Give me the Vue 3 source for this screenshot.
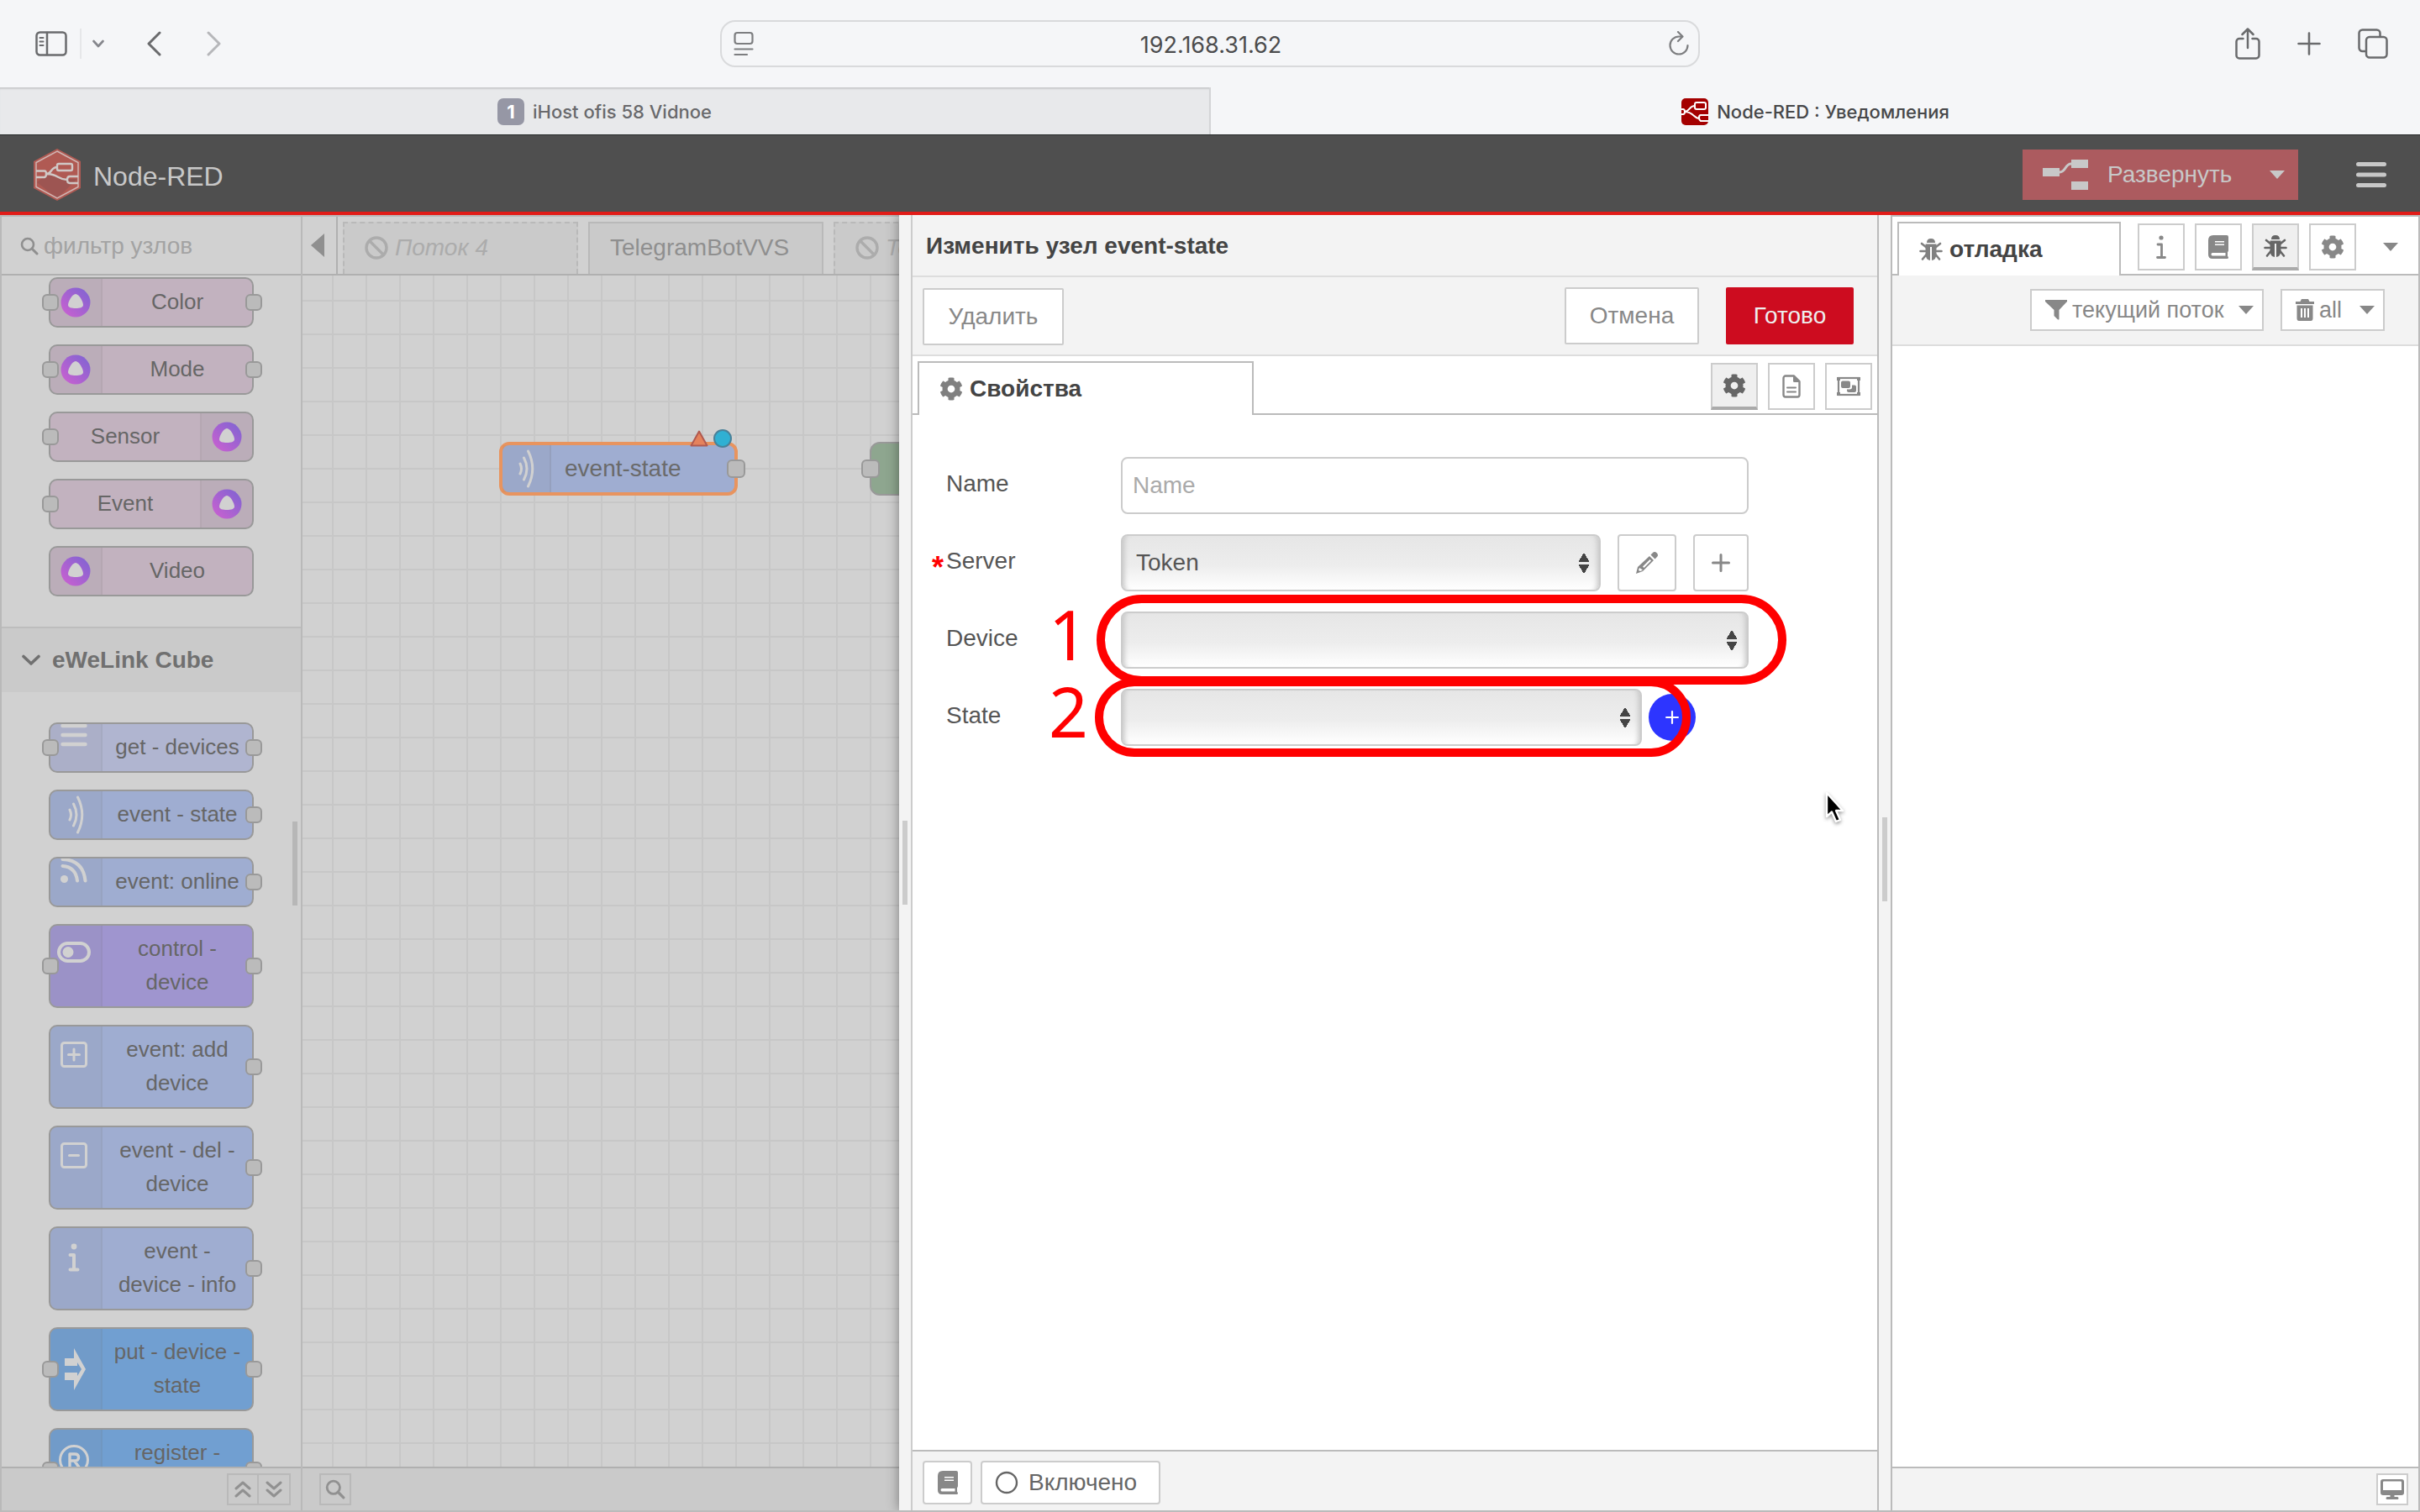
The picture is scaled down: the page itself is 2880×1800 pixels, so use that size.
<script setup>
import { h, ref } from 'vue'

const line = (d, w = 2, extra = '') =>
  `<path d="${d}" fill="none" stroke="currentColor" stroke-width="${w}" stroke-linecap="round" stroke-linejoin="round" ${extra}/>`
const fill = (d) => `<path d="${d}" fill="currentColor" fill-rule="evenodd"/>`

const shapes = {
  sidebar: [38, 30, `<rect x="1.500" y="1.500" width="35" height="27" rx="4" fill="none" stroke="currentColor" stroke-width="2.500"/>` + line('M14 2V28', 2.5) + line('M5.500 8H9.500M5.500 12.500H9.500M5.500 17H9.500', 2)],
  chevDown: [14, 10, line('M1.500 2L7 8L12.500 2', 2.6)],
  back: [18, 30, line('M16 2L3 15L16 28', 3)],
  forward: [18, 30, line('M2 2L15 15L2 28', 3)],
  reader: [24, 30, `<rect x="1.500" y="2" width="21" height="13" rx="3" fill="none" stroke="currentColor" stroke-width="2.200"/>` + line('M1.500 21.500H22.500M1.500 28H16', 2.2)],
  reload: [26, 30, line('M23.500 17A10.500 10.500 0 1 1 13 6.500H17M12 1L17.500 6.500L12 12', 2.2)],
  share: [30, 38, line('M9.500 13H5A3.500 3.500 0 0 0 1.500 16.500V33A3.500 3.500 0 0 0 5 36.500H25A3.500 3.500 0 0 0 28.500 33V16.500A3.500 3.500 0 0 0 25 13H20.500M15 24V2M8.500 8L15 1.500L21.500 8', 2.5)],
  add: [28, 28, line('M14 1.500V26.500M1.500 14H26.500', 2.6)],
  tabs: [36, 36, `<rect x="10" y="10" width="24.500" height="24.500" rx="4" fill="none" stroke="currentColor" stroke-width="2.500"/>` + line('M9.500 27H5.500A4 4 0 0 1 1.500 23V5.500A4 4 0 0 1 5.500 1.500H22.500A4 4 0 0 1 26.500 5.500V9.500', 2.5)],
  favicon: [32, 32, `<rect width="32" height="32" rx="5" fill="#a40000"/><g fill="none" stroke="#fff" stroke-width="2"><rect x="16" y="5" width="13" height="8" rx="2"/><path d="M0 13H2Q4 13 4 16T2 19H0M4 16C10 16 9 9 16 9M4 16C14 16 15 24 21 24M32 20H23Q21 20 21 23T23 27H32"/></g>`],
  logo: [56, 62, `<path d="M28 0L56 15V47L28 62L0 47V15Z" fill="#b05a53"/><path d="M52 36L28 59L4 40L18 29L36 36Z" fill="#9d5552"/><path d="M28 3L53 16.500V45.500L28 59L3 45.500V16.500Z" fill="none" stroke="#d0b5b3" stroke-width="1.500"/><g fill="none" stroke="#d0c8c6" stroke-width="2.400"><rect x="28" y="18" width="18" height="8" rx="2"/><path d="M3 26.500H13Q15 26.500 15 30T13 34H3M15 30C22 30 20 22 28 22M16 30C29 30 29 37 40 37M53 33H43Q40 33 40 37T43 41H53"/></g>`],
  deploy: [54, 36, fill('M0 10H20V20H0ZM34 0H54V10H34ZM34 26H54V36H34Z') + line('M20 15C28 15 26 5 34 5', 3)],
  burger: [36, 30, line('M2.500 2.500H33.500M2.500 15H33.500M2.500 27.500H33.500', 5)],
  caret: [18, 10, fill('M0 0H18L9 10Z')],
  search: [22, 22, `<circle cx="9" cy="9" r="7" fill="none" stroke="currentColor" stroke-width="2.600"/>` + line('M14 14L20 20', 3)],
  left: [16, 28, fill('M16 0V28L0 14Z')],
  ban: [28, 28, `<circle cx="14" cy="14" r="12" fill="none" stroke="currentColor" stroke-width="3.400"/>` + line('M6 6L22 22', 3.4)],
  up2: [20, 22, line('M2 10L10 3L18 10M2 19L10 12L18 19', 3)],
  down2: [20, 22, line('M2 3L10 10L18 3M2 12L10 19L18 12', 3)],
  chevron: [22, 14, line('M2 2.500L11 11L20 2.500', 3.6)],
  cog: [512, 512, fill('M487.4 315.7l-42.6-24.6c4.3-23.2 4.3-47 0-70.2l42.6-24.6c4.9-2.8 7.1-8.6 5.5-14-11.1-35.6-30-67.8-54.7-94.6-3.8-4.1-10-5.1-14.8-2.3L380.8 110c-17.9-15.4-38.5-27.3-60.8-35.1V25.8c0-5.6-3.9-10.5-9.4-11.7-36.7-8.2-74.3-7.8-109.2 0-5.5 1.200-9.400 6.100-9.400 11.700V75c-22.200 7.900-42.800 19.800-60.800 35.100L88.700 85.500c-4.900-2.800-11-1.900-14.800 2.300-24.700 26.700-43.600 58.900-54.700 94.600-1.700 5.400.6 11.200 5.500 14L67.300 221c-4.300 23.200-4.300 47 0 70.200l-42.600 24.600c-4.900 2.800-7.100 8.600-5.500 14 11.100 35.600 30 67.800 54.700 94.600 3.800 4.100 10 5.100 14.800 2.300l42.600-24.600c17.900 15.400 38.500 27.300 60.800 35.100v49.200c0 5.600 3.900 10.500 9.400 11.700 36.700 8.200 74.300 7.800 109.200 0 5.500-1.200 9.400-6.100 9.400-11.700v-49.200c22.200-7.900 42.800-19.800 60.800-35.100l42.600 24.600c4.900 2.800 11 1.900 14.800-2.300 24.700-26.700 43.600-58.900 54.700-94.600 1.500-5.500-.7-11.300-5.600-14.100zM256 336c-44.100 0-80-35.900-80-80s35.900-80 80-80 80 35.900 80 80-35.900 80-80 80z')],
  doc: [22, 28, line('M1.500 4A2.500 2.500 0 0 1 4 1.500H14L20.500 8V24A2.500 2.500 0 0 1 18 26.500H4A2.500 2.500 0 0 1 1.500 24Z', 2.4) + fill('M13 1L21 9H14.500Q13 9 13 7.500Z') + line('M6 15.500H16M6 20.500H16', 2)],
  group: [28, 24, `<rect x="2" y="2" width="24" height="20" fill="none" stroke="currentColor" stroke-width="2.200"/>` + fill('M0 1H4V5H0ZM24 1H28V5H24ZM0 19H4V23H0ZM24 19H28V23H24ZM7 5.500H14Q16 5.500 16 7.500V12Q16 14 14 14H7Q5 14 5 12V7.500Q5 5.500 7 5.500ZM18 10.500H21Q23 10.500 23 12.500V17Q23 19 21 19H14Q12 19 12 17V15.500H15Q18 15.500 18 13Z')],
  pencil: [28, 28, fill('M1 27L3 19L17 6L22 11L9 24ZM5 20L4 23L6 24L9 22.500ZM9 18.500L10.500 20L19 11.500L17.500 10ZM18.500 4.500L21 2Q23 0 26 2.500Q28 5 26 7L23.500 9.500Z')],
  plus: [22, 22, line('M11 1.500V20.500M1.500 11H20.500', 3)],
  info: [12, 30, `<circle cx="6" cy="4" r="2.600" fill="currentColor"/>` + line('M2 12H6.500V27M1.500 27.500H10.500', 2.8)],
  book: [24, 28, fill('M6 0H22Q24 0 24 2V18Q24 19.500 23 20V25Q24 25.500 24 26.500Q24 28 22.500 28H5Q0 28 0 23V6Q0 0 6 0ZM8 7V8.500H19V7ZM8 10.500V12H19V10.500ZM5 21Q3.500 21 3.500 22.700T5 24.500H20.500V21Z')],
  bug: [28, 28, fill('M9 6Q9 1 14 1T19 6ZM7.500 7.500H20.500V19Q20.500 26 15 27V11H13V27Q7.500 26 7.500 19Z') + line('M8 11L3 7M20 11L25 7M7 16H1.500M21 16H26.500M8.500 20L4 25.500M19.500 20L24 25.500', 2.6)],
  funnel: [26, 24, fill('M0 0H26Q27 1.500 25 3L16.500 12V23Q16 24 14.500 23L10.500 19V12L1 3Q-1 1.500 0 0Z')],
  trash: [22, 26, fill('M7 0H15L16.500 3H22V6H0V3H5.500ZM1.500 7.500H20.500V23Q20.500 26 18 26H4Q1.500 26 1.500 23ZM6 11V22H8V11ZM10 11V22H12V11ZM14 11V22H16V11Z')],
  monitor: [28, 24, fill('M3 0H25Q28 0 28 3V16Q28 19 25 19H16.500V21H20Q21.500 21 21.500 22.500T20 24H8Q6.500 24 6.500 22.500T8 21H11.500V19H3Q0 19 0 16V3Q0 0 3 0ZM4 2.500Q3 2.500 3 3.500V13H25V3.500Q25 2.500 24 2.500Z')],
  circle: [28, 28, `<circle cx="14" cy="14" r="12" fill="none" stroke="currentColor" stroke-width="2.400"/>`],
  alice: [36, 36, `<defs><linearGradient id="alice" x1="0" y1="1" x2="1" y2="0"><stop offset="0" stop-color="#cf60d0"/><stop offset="1" stop-color="#7b64d2"/></linearGradient></defs><circle cx="18" cy="18" r="17.500" fill="url(#alice)"/><path d="M18 8C22 8 27 17 27 21C27 24 23 25 18 25S9 24 9 21C9 17 14 8 18 8Z" fill="#d1d1d1"/>`],
  list: [32, 28, line('M2.500 2H29.500M2.500 13H29.500M2.500 24H29.500', 4.4)],
  waves: [20, 48, line('M3 18Q6 24 3 30M7.500 11Q14.500 24 7.500 37M12.500 3Q23 24 12.500 45', 3)],
  rss: [32, 30, `<circle cx="4.500" cy="24.500" r="4.500" fill="currentColor"/>` + line('M2.500 9Q18 10 20 26.500M2.500 1Q27 2 29.500 26.500', 4)],
  toggle: [42, 28, `<rect x="3" y="3" width="36" height="21" rx="10.500" fill="none" stroke="currentColor" stroke-width="4"/><circle cx="14" cy="13.500" r="6.500" fill="currentColor"/>`],
  boxAdd: [32, 32, `<rect x="1.500" y="1.500" width="29" height="28" rx="3" fill="none" stroke="currentColor" stroke-width="3"/>` + line('M9.500 15.500H22.500M16 9V22', 3)],
  boxDel: [32, 32, `<rect x="1.500" y="1.500" width="29" height="28" rx="3" fill="none" stroke="currentColor" stroke-width="3"/>` + line('M10.500 15.500H21.500', 3)],
  infoBold: [14, 34, `<circle cx="7" cy="4" r="3.400" fill="currentColor"/>` + line('M2.500 14H7V31M2.500 31.500H11.500', 4)],
  put: [26, 50, fill('M0 12H11V0L25 25L11 50V38H0V29H15V33L20 25L15 17V21H0Z')],
  registered: [36, 36, `<circle cx="18" cy="18" r="16.500" fill="none" stroke="currentColor" stroke-width="3"/>` + line('M13 26V11H19Q23.500 11 23.500 15T19 19H13M18.500 19L23.500 26', 3.4)],
  warn: [22, 20, `<path d="M11 1.500L20.500 18.500H1.500Z" fill="#e5825c" stroke="#b05a50" stroke-width="2" stroke-linejoin="round"/>`],
  changed: [22, 22, `<circle cx="11" cy="11" r="10" fill="#30b0d3" stroke="#4a8199" stroke-width="2"/>`],
  cursor: [26, 40, `<path d="M2 2V30L8 24.500L13 36L18 34L13 23H21Z" fill="#000" stroke="#fff" stroke-width="2.400" stroke-linejoin="round"/>`]
}

const Icon = ({ name, size }) => {
  const [w, ht, body] = shapes[name]
  const k = size ? size / w : 1
  return h('svg', { width: w * k, height: ht * k, viewBox: `0 0 ${w} ${ht}`, innerHTML: body, 'aria-hidden': 'true' })
}
Icon.props = ['name', 'size']

const aliceNodes = [
  { lines: ['Color'], input: true, output: true },
  { lines: ['Mode'], input: true, output: true },
  { lines: ['Sensor'], input: true, right: true },
  { lines: ['Event'], input: true, right: true },
  { lines: ['Video'] }
]
const cubeNodes = [
  { lines: ['get - devices'], tone: 'pale', icon: 'list', input: true, output: true, at: 'top' },
  { lines: ['event - state'], tone: 'blue', icon: 'waves', output: true, at: 'mid' },
  { lines: ['event: online'], tone: 'blue', icon: 'rss', output: true, at: 'top' },
  { lines: ['control -', 'device'], tone: 'violet', icon: 'toggle', input: true, output: true },
  { lines: ['event: add', 'device'], tone: 'blue', icon: 'boxAdd', output: true },
  { lines: ['event - del -', 'device'], tone: 'blue', icon: 'boxDel', output: true },
  { lines: ['event -', 'device - info'], tone: 'blue', icon: 'infoBold', output: true },
  { lines: ['put - device -', 'state'], tone: 'azure', icon: 'put', input: true, output: true, at: 'mid' },
  { lines: ['register -', 'device'], tone: 'azure', icon: 'registered', input: true, output: true }
]
const categoryNodes = [aliceNodes.map((n) => ({ ...n, tone: 'pink', icon: 'alice', at: 'mid' })), cubeNodes]

const address = ref('192.168.31.62')
const nodeName = ref('')
const server = ref('Token')
</script>

<template>
  <div class="window">
    <nav class="toolbar">
      <div class="nav-group">
        <button class="plain" aria-label="Sidebar"><Icon name="sidebar" /></button>
        <span class="nav-rule"></span>
        <button class="plain menu" aria-label="Sidebar menu"><Icon name="chevDown" /></button>
        <button class="plain prev" aria-label="Back"><Icon name="back" /></button>
        <button class="plain next" aria-label="Forward"><Icon name="forward" /></button>
      </div>
      <div class="address">
        <Icon name="reader" />
        <input v-model="address" aria-label="Address" />
        <button class="plain" aria-label="Reload"><Icon name="reload" /></button>
      </div>
      <div class="nav-group end">
        <button class="plain" aria-label="Share"><Icon name="share" /></button>
        <button class="plain" aria-label="New tab"><Icon name="add" /></button>
        <button class="plain" aria-label="Tabs"><Icon name="tabs" /></button>
      </div>
    </nav>

    <div class="browser-tabs">
      <a href="#" class="btab idle"><span class="count">1</span>iHost ofis 58 Vidnoe</a>
      <a href="#" class="btab"><Icon name="favicon" />Node-RED : Уведомления</a>
    </div>

    <header class="header">
      <Icon name="logo" />
      <span class="brand">Node-RED</span>
      <button class="deploy"><Icon name="deploy" /><span>Развернуть</span><Icon name="caret" /></button>
      <button class="plain burger" aria-label="Menu"><Icon name="burger" /></button>
    </header>

    <main class="main">
      <aside class="palette">
        <label class="filter"><Icon name="search" /><input placeholder="фильтр узлов" aria-label="фильтр узлов" /></label>
        <div class="palette-list">
          <template v-for="(nodes, c) in categoryNodes" :key="c">
            <h2 v-if="c" class="category"><Icon name="chevron" />eWeLink Cube</h2>
            <div class="nodes" :class="{ first: !c }">
              <div v-for="n in nodes" :key="n.lines[0]" class="node" :class="[n.tone, { flip: n.right }]">
                <span class="node-icon" :class="n.at"><Icon :name="n.icon" /></span>
                <span class="node-label"><span v-for="l in n.lines" :key="l">{{ l }}</span></span>
                <i v-if="n.input" class="port in"></i>
                <i v-if="n.output" class="port out"></i>
              </div>
            </div>
          </template>
          <i class="handle"></i>
        </div>
        <footer class="foot">
          <button class="tool" aria-label="Collapse all"><Icon name="up2" /></button>
          <button class="tool joined" aria-label="Expand all"><Icon name="down2" /></button>
        </footer>
      </aside>

      <section class="workspace">
        <div class="flow-tabs">
          <button class="plain collapse" aria-label="Scroll tabs"><Icon name="left" /></button>
          <button class="flow off"><Icon name="ban" />Поток 4</button>
          <button class="flow">TelegramBotVVS</button>
          <button class="flow off"><Icon name="ban" />Te</button>
        </div>
        <div class="canvas">
          <div class="flow-node selected">
            <span class="flow-icon"><Icon name="waves" /></span>
            <span class="flow-label">event-state</span>
            <i class="port out"></i>
            <Icon name="warn" class="badge-warn" />
            <Icon name="changed" class="badge-changed" />
          </div>
          <div class="flow-node green"><i class="port in"></i></div>
        </div>
        <footer class="foot start">
          <button class="tool" aria-label="Search flows"><Icon name="search" size="24" /></button>
        </footer>
      </section>

      <section class="tray">
        <div class="tray-edge"><i class="grip"></i></div>
        <div class="tray-body">
          <h1 class="tray-title">Изменить узел event-state</h1>
          <div class="tray-actions">
            <button class="btn">Удалить</button>
            <button class="btn cancel">Отмена</button>
            <button class="btn done">Готово</button>
          </div>
          <div class="tabbar tray-tabs">
            <a href="#" class="tab"><Icon name="cog" size="28" />Свойства</a>
            <div class="tab-buttons">
              <button class="sq active" aria-label="Свойства"><Icon name="cog" size="28" /></button>
              <button class="sq" aria-label="Описание"><Icon name="doc" /></button>
              <button class="sq" aria-label="Внешний вид"><Icon name="group" /></button>
            </div>
          </div>
          <form class="form" @submit.prevent>
            <div class="row">
              <label for="f-name">Name</label>
              <input id="f-name" v-model="nodeName" placeholder="Name" />
            </div>
            <div class="row">
              <label for="f-server"><b>*</b>Server</label>
              <select id="f-server" v-model="server"><option>Token</option></select>
              <button class="side edit" aria-label="Edit server"><Icon name="pencil" /></button>
              <button class="side" aria-label="Add server"><Icon name="plus" /></button>
            </div>
            <div class="row">
              <label for="f-device">Device</label>
              <select id="f-device"><option></option></select>
              <span class="step">1</span>
              <span class="ring device"></span>
            </div>
            <div class="row">
              <label for="f-state">State</label>
              <select id="f-state"><option></option></select>
              <button class="round" aria-label="Add state"><Icon name="plus" size="16" /></button>
              <span class="step">2</span>
              <span class="ring"></span>
            </div>
            <Icon name="cursor" class="cursor" />
          </form>
          <footer class="tray-foot">
            <button class="fbtn" aria-label="Help"><Icon name="book" /></button>
            <button class="fbtn wide"><Icon name="circle" />Включено</button>
          </footer>
        </div>
      </section>

      <div class="separator"><i class="grip"></i></div>

      <aside class="sidebar">
        <div class="tabbar">
          <a href="#" class="tab"><Icon name="bug" />отладка</a>
          <div class="tab-buttons">
            <button class="sq" aria-label="Info"><Icon name="info" /></button>
            <button class="sq" aria-label="Help"><Icon name="book" /></button>
            <button class="sq active" aria-label="Debug"><Icon name="bug" /></button>
            <button class="sq" aria-label="Config"><Icon name="cog" size="28" /></button>
          </div>
          <button class="plain more" aria-label="More"><Icon name="caret" /></button>
        </div>
        <div class="debug-bar">
          <button class="dbtn"><Icon name="funnel" />текущий поток<Icon name="caret" /></button>
          <button class="dbtn all"><Icon name="trash" />all<Icon name="caret" /></button>
        </div>
        <div class="debug-list"></div>
        <footer class="foot light">
          <button class="tool" aria-label="Open window"><Icon name="monitor" /></button>
        </footer>
      </aside>
    </main>
  </div>
</template>

<style>
body {
  margin: 0;
}
</style>

<style scoped>
.window {
  height: 100vh;
  display: flex;
  flex-direction: column;
  overflow: hidden;
  font: 28px/40px "Liberation Sans", Arial, sans-serif;
  color: #888;
}
.window *,
.window *::before {
  box-sizing: border-box;
}
svg {
  display: block;
  flex: none;
}
button,
input,
select {
  font: inherit;
  color: inherit;
  margin: 0;
  padding: 0;
  border: 0;
  background: none;
  border-radius: 0;
  outline: 0;
}
a {
  color: inherit;
  text-decoration: none;
}
.plain {
  display: flex;
  align-items: center;
  justify-content: center;
}

/* browser chrome */
.toolbar {
  height: 104px;
  flex: none;
  display: flex;
  align-items: center;
  background: #f5f6f8;
  color: #6a6b6d;
  padding: 0 38px;
  font-family: Inter, sans-serif;
}
.nav-group {
  flex: 1;
  display: flex;
  align-items: center;
  padding-left: 4px;
}
.nav-rule {
  width: 2px;
  height: 36px;
  margin: 0 13px 0 15px;
  background: #e6e7e9;
}
.menu {
  color: #85868c;
}
.prev {
  margin-left: 50px;
}
.next {
  margin-left: 54px;
  color: #b6b7ba;
}
.end {
  justify-content: flex-end;
  gap: 44px;
}
.address {
  width: 1166px;
  height: 56px;
  display: flex;
  align-items: center;
  border: 2px solid #d9dadc;
  border-radius: 18px;
  padding: 0 10px 0 14px;
  color: #7d7e80;
}
.address input {
  flex: 1;
  min-width: 0;
  height: 54px;
  padding-top: 2px;
  font-size: 27px;
  text-align: center;
  color: #4c4c4d;
}
.browser-tabs {
  height: 56px;
  flex: none;
  display: flex;
  font: 500 22px/56px Inter, sans-serif;
}
.btab {
  flex: 1;
  display: flex;
  align-items: center;
  justify-content: center;
  gap: 10px;
  padding-top: 2px;
  background: #f5f6f8;
  color: #47484a;
}
.idle {
  background: #e8e9eb;
  border-right: 2px solid #d3d4d6;
  box-shadow: inset 0 3px 2px -1px #c9cacc;
  color: #69696c;
}
.count {
  width: 32px;
  height: 32px;
  line-height: 32px;
  border-radius: 7px;
  background: #9697a5;
  color: #fff;
  font-weight: 700;
  text-align: center;
}

/* editor header */
.header {
  height: 96px;
  flex: none;
  display: flex;
  align-items: center;
  padding: 2px 40px 0;
  background: #4f4f4f;
  border-top: 1px solid #262a29;
  border-bottom: 4px solid #e11c18;
  color: #c8c8c8;
}
.brand {
  margin: 0 auto 0 15px;
  padding-top: 4px;
  font-size: 32px;
}
.deploy {
  width: 328px;
  height: 60px;
  display: flex;
  align-items: center;
  background: #ac5b5f;
  padding: 0 16px 0 24px;
  gap: 23px;
}
.deploy span {
  flex: 1;
  text-align: left;
}
.burger {
  margin-left: 69px;
}

.main {
  flex: 1;
  min-height: 0;
  display: grid;
  grid-template-columns: 360px minmax(0, 710fr) minmax(0, 1166fr) 14px 630px;
  border-bottom: 2px solid #bbb;
}

/* palette */
.palette {
  min-height: 0;
  display: flex;
  flex-direction: column;
  background: #d1d1d1;
  border: 2px solid #b9b9b9;
  border-bottom: 0;
  color: #666;
}
.filter {
  height: 70px;
  flex: none;
  display: flex;
  align-items: center;
  gap: 6px;
  padding: 2px 0 0 22px;
  border-bottom: 2px solid #b0b0b0;
  color: #8f8f8f;
}
.filter input {
  flex: 1;
  min-width: 0;
}
.filter input::placeholder {
  color: #a3a3a3;
  opacity: 1;
}
.palette-list {
  flex: 1;
  min-height: 0;
  overflow: hidden;
  position: relative;
}
.nodes {
  display: flex;
  flex-direction: column;
  gap: 20px;
  padding: 36px 56px;
}
.nodes.first {
  padding-top: 2px;
}
.category {
  height: 78px;
  margin: 0;
  display: flex;
  align-items: center;
  gap: 14px;
  padding-left: 24px;
  font-size: 28px;
  background: #cacaca;
  border-top: 2px solid #bdbdbd;
  color: #707070;
}
.node {
  position: relative;
  display: flex;
  border: 2px solid #999;
  border-radius: 10px;
  font-size: 26px;
}
.flip {
  flex-direction: row-reverse;
}
.node-icon {
  width: 62px;
  display: flex;
  justify-content: center;
  align-items: flex-start;
  padding: 18px 4px 0 0;
  overflow: hidden;
  background: rgba(110, 110, 110, 0.08);
  border-right: 2px solid rgba(100, 100, 100, 0.08);
  border-radius: 8px 0 0 8px;
  color: #d1d1d1;
}
.flip .node-icon {
  border-right: 0;
  border-left: 2px solid rgba(100, 100, 100, 0.08);
  border-radius: 0 8px 8px 0;
}
.node-icon.top {
  padding-top: 0;
}
.node-icon.mid {
  align-items: center;
  padding: 0;
}
.node-label {
  flex: 1;
  display: flex;
  flex-direction: column;
  align-items: center;
  padding: 7px 0 9px;
  white-space: nowrap;
}
.pink { background: #c2b2bf; }
.pale { background: #b0b5d0; }
.blue { background: #9fadd1; }
.violet { background: #9f95cf; }
.azure { background: #719fd1; }
.port {
  position: absolute;
  top: calc(50% - 10px);
  width: 20px;
  height: 20px;
  background: #bbb;
  border: 2px solid #999;
  border-radius: 6px;
}
.port.in {
  left: -10px;
}
.port.out {
  right: -12px;
}
.handle {
  position: absolute;
  right: 4px;
  top: calc(50% - 59px);
  width: 6px;
  height: 100px;
  background: #b7b7b7;
}
.foot {
  height: 52px;
  flex: none;
  display: flex;
  align-items: center;
  justify-content: flex-end;
  padding-right: 12px;
  background: #cacaca;
  border-top: 2px solid #b0b0b0;
}
.foot.start {
  justify-content: flex-start;
  padding-left: 20px;
}
.foot.light {
  background: #f3f3f3;
  border-color: #bbb;
}
.tool {
  width: 38px;
  height: 38px;
  display: flex;
  align-items: center;
  justify-content: center;
  border: 2px solid #b9b9b9;
  color: #919191;
}
.joined {
  border-left: 0;
}
.light .tool {
  background: #fff;
  border-color: #ccc;
  color: #888;
}

/* workspace */
.workspace {
  min-height: 0;
  display: flex;
  flex-direction: column;
  overflow: hidden;
  background: #d1d1d1;
  border-top: 2px solid #b9b9b9;
}
.flow-tabs {
  height: 70px;
  flex: none;
  display: flex;
  align-items: flex-end;
  gap: 12px;
  overflow: hidden;
  border-bottom: 2px solid #b0b0b0;
}
.collapse {
  width: 42px;
  height: 68px;
  flex: none;
  margin-right: -6px;
  padding-right: 4px;
  border-right: 2px solid #b0b0b0;
  color: #8f8f8f;
}
.flow {
  width: 280px;
  height: 62px;
  flex: none;
  display: flex;
  align-items: center;
  gap: 8px;
  padding: 0 0 2px 24px;
  background: #cacaca;
  border: 2px solid #b9b9b9;
  border-bottom: 0;
  color: #8f8f8f;
}
.off {
  border-style: dashed;
  font-style: italic;
  color: #acacac;
}
.canvas {
  flex: 1;
  position: relative;
  overflow: hidden;
  background-image: linear-gradient(#c7c7c7 2px, transparent 2px), linear-gradient(90deg, #c7c7c7 2px, transparent 2px);
  background-size: 40px 40px;
  background-position: 35px 29px;
}
.flow-node {
  position: absolute;
  top: 198px;
  left: 234px;
  width: 284px;
  height: 64px;
  display: flex;
  align-items: center;
  background: #9fadd1;
  border: 4px solid #e8945f;
  border-radius: 12px;
  color: #6a6a6a;
}
.flow-icon {
  align-self: stretch;
  width: 58px;
  display: flex;
  align-items: center;
  justify-content: center;
  background: rgba(110, 110, 110, 0.08);
  border-right: 2px solid rgba(100, 100, 100, 0.1);
  color: #d1d1d1;
}
.flow-label {
  padding-left: 16px;
}
.flow-node .port {
  width: 22px;
  height: 22px;
  top: calc(50% - 11px);
}
.flow-node .out {
  right: -13px;
}
.badge-warn {
  position: absolute;
  right: 31px;
  top: -18px;
}
.badge-changed {
  position: absolute;
  right: 3px;
  top: -19px;
}
.green {
  left: 675px;
  background: #8ea68f;
  border: 2px solid #999;
}
.green .in {
  left: -12px;
}

/* edit tray */
.tray {
  position: relative;
  min-width: 0;
  min-height: 0;
  display: flex;
  box-shadow: 0 0 14px rgba(0, 0, 0, 0.4);
  clip-path: inset(0 0 0 -20px);
  border-right: 2px solid #bbb;
}
.tray-edge {
  width: 16px;
  flex: none;
  display: flex;
  align-items: center;
  justify-content: center;
  background: #f3f3f3;
  border-right: 2px solid #ccc;
}
.grip {
  width: 6px;
  height: 100px;
  background: #ccc;
}
.tray-body {
  flex: 1;
  min-width: 0;
  display: flex;
  flex-direction: column;
  background: #fff;
}
.tray-title {
  height: 74px;
  flex: none;
  margin: 0;
  padding-left: 16px;
  font-size: 28px;
  line-height: 74px;
  color: #444;
  background: #f3f3f3;
  border-bottom: 2px solid #ddd;
}
.tray-actions {
  height: 94px;
  flex: none;
  display: flex;
  align-items: center;
  padding: 0 28px 0 12px;
  background: #f3f3f3;
  border-bottom: 2px solid #ddd;
}
.btn {
  height: 68px;
  width: 168px;
  margin-top: 2px;
  background: #fff;
  border: 2px solid #ccc;
  border-radius: 2px;
}
.cancel {
  width: 160px;
  margin-top: 0;
  margin-left: auto;
}
.done {
  width: 152px;
  margin-top: 0;
  margin-left: 32px;
  background: #cd0c1f;
  border-color: #cd0c1f;
  color: #eee;
}
.tabbar {
  height: 70px;
  flex: none;
  display: flex;
  align-items: center;
  background: linear-gradient(#bbb, #bbb) 0 100% / 100% 2px no-repeat #fff;
}
.tab {
  align-self: flex-end;
  width: 266px;
  height: 64px;
  display: flex;
  align-items: center;
  gap: 8px;
  margin-left: 6px;
  padding-left: 24px;
  background: #fff;
  border: 2px solid #bbb;
  border-bottom: 0;
  font-weight: 700;
  color: #444;
}
.tab svg {
  color: #808080;
}
.tray-tabs .tab {
  width: 400px;
}
.tray-tabs .tab-buttons {
  margin-left: auto;
  margin-right: 6px;
}
.tab-buttons {
  display: flex;
  gap: 12px;
  margin-left: 20px;
  padding-top: 2px;
}
.sq {
  width: 56px;
  height: 56px;
  display: flex;
  align-items: center;
  justify-content: center;
  background: #fff;
  border: 2px solid #ccc;
}
.sq.active {
  background: #efefef;
  border-bottom: 4px solid #aaa;
  color: #666;
}
.form {
  position: relative;
  flex: 1;
  display: flex;
  flex-direction: column;
  gap: 24px;
  padding: 50px 153px 0 18px;
  color: #555;
}
.row {
  position: relative;
  height: 68px;
  display: flex;
  align-items: center;
}
.row label {
  width: 230px;
  height: 44px;
  flex: none;
  padding-left: 22px;
}
.row label b {
  display: inline-block;
  width: 17px;
  height: 28px;
  margin-left: -17px;
  font-size: 36px;
  line-height: 40px;
  vertical-align: middle;
  color: #f00;
}
.row input,
.row select {
  flex: 1;
  min-width: 0;
  height: 68px;
  border: 2px solid #ccc;
  border-radius: 8px;
  padding: 0 12px;
  background-color: #fff;
}
.row input::placeholder {
  color: #aaa;
  opacity: 1;
}
.row select {
  appearance: none;
  padding: 0 16px;
  background:
    conic-gradient(from 149deg at 50% 0, #444 62deg, transparent 0) right 11px top 20px / 14px 11px no-repeat,
    conic-gradient(from -31deg at 50% 100%, #444 62deg, transparent 0) right 11px top 34px / 14px 11px no-repeat,
    linear-gradient(#e6e6e6, #ededed 55%, #fff);
  box-shadow: inset 8px 0 6px -6px #c4c4c4, inset -8px 0 6px -6px #c4c4c4;
}
.side {
  width: 66px;
  height: 68px;
  display: flex;
  align-items: center;
  justify-content: center;
  margin-left: 20px;
  border: 2px solid #ccc;
  border-radius: 4px;
  color: #888;
}
.edit {
  width: 70px;
}
.round {
  width: 56px;
  height: 56px;
  display: flex;
  align-items: center;
  justify-content: center;
  margin: 0 63px 0 8px;
  border-radius: 50%;
  background: #2d35ff;
  color: #fff;
}
.step {
  position: absolute;
  left: 144px;
  top: -14px;
  font: 82px/80px "Noto Sans", sans-serif;
  color: #f00;
}
.ring {
  position: absolute;
  inset: -13px 69px -13px 199px;
  border: 10px solid #f00;
  border-radius: 54px;
  pointer-events: none;
}
.ring.device {
  inset: -20px -45px -19px 201px;
}
.cursor {
  position: absolute;
  right: 36px;
  top: 448px;
  filter: drop-shadow(0 2px 2px rgba(0, 0, 0, 0.4));
}
.tray-foot {
  height: 72px;
  flex: none;
  display: flex;
  align-items: center;
  gap: 10px;
  padding: 4px 12px 0;
  background: #f3f3f3;
  border-top: 2px solid #bbb;
}
.fbtn {
  width: 59px;
  height: 52px;
  display: flex;
  align-items: center;
  justify-content: center;
  gap: 12px;
  background: #fff;
  border: 2px solid #ccc;
  border-radius: 4px;
}
.wide {
  width: 214px;
  justify-content: flex-start;
  padding-left: 15px;
  color: #666;
}
.separator {
  display: flex;
  align-items: center;
  justify-content: center;
  background: #f3f3f3;
}
.separator .grip {
  margin-bottom: 8px;
}

/* debug sidebar */
.sidebar {
  min-height: 0;
  display: flex;
  flex-direction: column;
  background: #fff;
  border: 2px solid #bbb;
  border-bottom: 0;
}
.more {
  margin: 2px 24px 0 auto;
}
.debug-bar {
  height: 84px;
  flex: none;
  display: flex;
  align-items: center;
  justify-content: flex-end;
  gap: 20px;
  padding-right: 40px;
  background: #f3f3f3;
  border-bottom: 2px solid #ddd;
  font-size: 27px;
}
.dbtn {
  height: 50px;
  width: 278px;
  display: flex;
  align-items: center;
  gap: 6px;
  padding: 0 10px 0 16px;
  background: #fff;
  border: 2px solid #ccc;
}
.dbtn svg:last-child {
  margin-left: auto;
}
.all {
  width: 124px;
}
.debug-list {
  flex: 1;
}
</style>
